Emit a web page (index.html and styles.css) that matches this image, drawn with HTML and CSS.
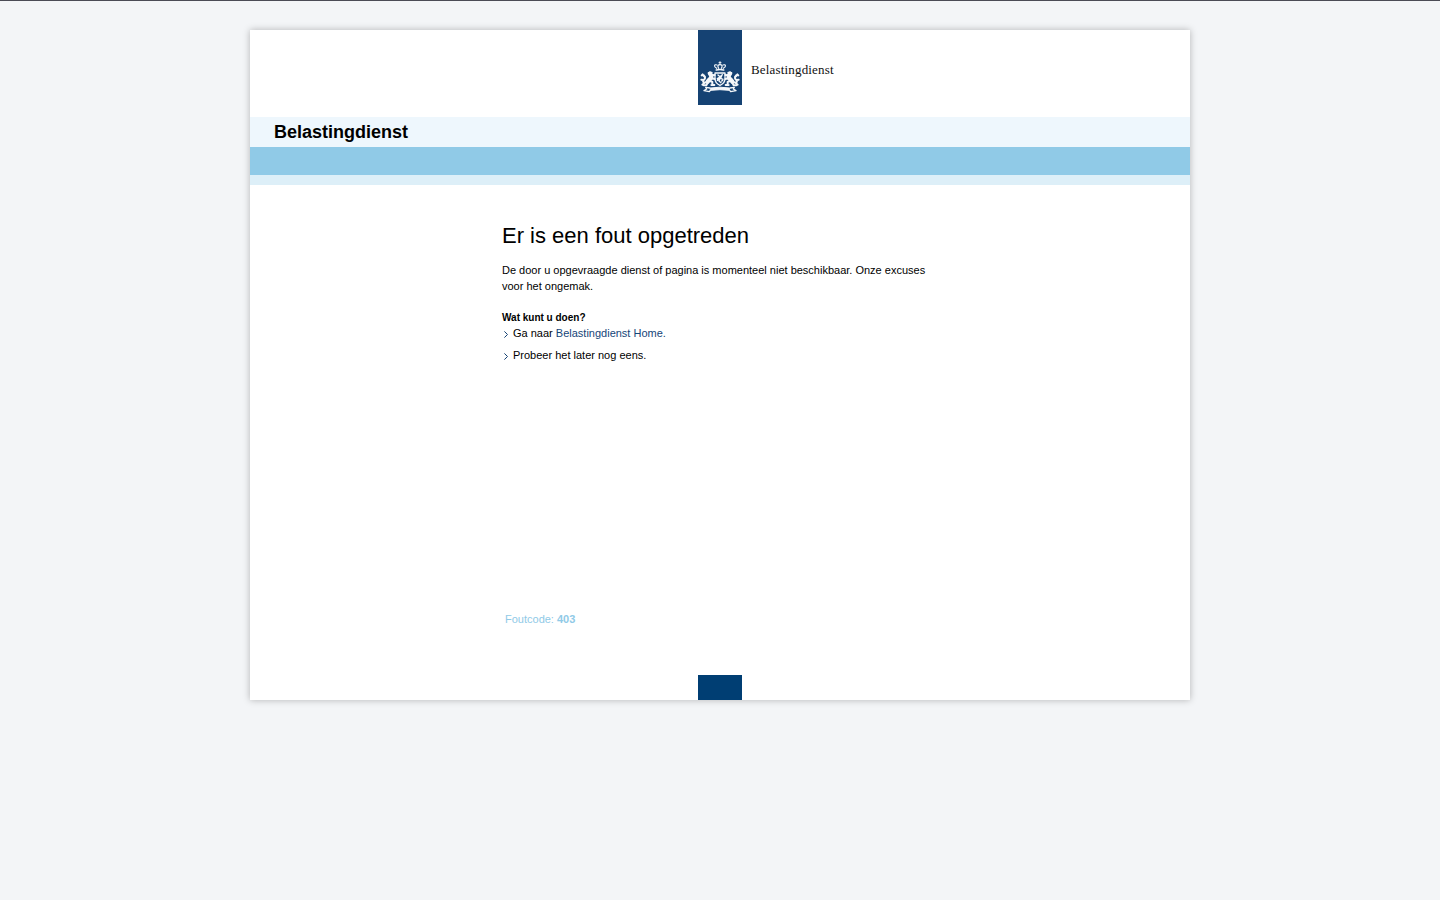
FILE: index.html
```html
<!DOCTYPE html>
<html lang="nl">
<head>
<meta charset="utf-8">
<title>Belastingdienst</title>
<link rel="stylesheet" href="styles.css">
</head>
<body>
<div class="page">
  <header class="logo">
    <svg class="logo-mark" viewBox="24 -60 132 225" aria-hidden="true">
      <rect x="24" y="-60" width="132" height="225" fill="#154273"/>
      <g fill="none" stroke="#f4f7fa" stroke-linecap="round" stroke-linejoin="round">
        <!-- crown -->
        <path d="M90 35v8M87 38h6" stroke-width="3"/>
        <path d="M80 55c-11-7-6-13 1-10 M100 55c11-7 6-13-1-10 M86 55c-5-8-1-11 4-11s9 3 4 11" stroke-width="3.6"/>
        <path d="M79 60q11-3 22 0" stroke-width="5"/>
        <!-- shield -->
        <path d="M75 69h30v17q0 13-15 20q-15-7-15-20z" stroke-width="4"/>
        <path d="M84 75l6 5l7-6M96 75l-4 10l7 3M90 81l-8 5M90 84l-3 9l6 5M82 91l5-4M95 93l3-2" stroke-width="4.2"/>
        <!-- lion supporters -->
        <g id="lion">
          <path d="M60 71c7 7 4 14-2 18l-5 6" stroke-width="13"/>
          <path d="M65 68l-9 1M66 76l8-1M62 84l12 3M57 92l10 4v8M54 96l-5 10h-8M64 105h9" stroke-width="6"/>
          <path d="M49 97c-11 3-12-4-7-8s4-8-2-12M38 73l-3 3M45 81l-5-6M40 90l-6-1M43 99l-6 5" stroke-width="6"/>
        </g>
        <use href="#lion" transform="translate(180 0) scale(-1 1)"/>
        <!-- motto ribbon -->
        <path d="M62 114q28-5 56 0v7q-28-4-56 0z" fill="#f4f7fa" stroke-width="3"/>
        <path d="M60 114l-13-2l3 5l-8 5l16 3l3-4M120 114l13-2l-3 5l8 5l-16 3l-3-4" stroke-width="4"/>
      </g>
    </svg>
    <span class="logo-name">Belastingdienst</span>
  </header>
  <div class="site-title">Belastingdienst</div>
  <div class="bar"></div>
  <div class="bar-light"></div>
  <main class="content">
    <h1>Er is een fout opgetreden</h1>
    <p>De door u opgevraagde dienst of pagina is momenteel niet beschikbaar. Onze excuses voor het ongemak.</p>
    <h2>Wat kunt u doen?</h2>
    <ul class="links">
      <li><svg class="arrow" viewBox="0 0 5 7"><path d="M.4.4L3.5 3.5L.4 6.6"/></svg><span>Ga naar <a href="#">Belastingdienst Home.</a></span></li>
      <li><svg class="arrow" viewBox="0 0 5 7"><path d="M.4.4L3.5 3.5L.4 6.6"/></svg><span>Probeer het later nog eens.</span></li>
    </ul>
    <div class="code">Foutcode: <b>403</b></div>
  </main>
  <div class="foot-block"></div>
</div>
</body>
</html>
```
FILE: styles.css
```css
* { box-sizing: border-box; }
body {
  margin: 0;
  padding-top: 29px;
  min-height: 900px;
  border-top: 1px solid #4b4b55;
  background: #f3f5f7;
  color: #000;
  font: 11px/16px "Liberation Sans", Arial, sans-serif;
}
.page {
  display: flex;
  flex-direction: column;
  width: 940px;
  height: 670px;
  margin: 0 auto;
  background: #fff;
  box-shadow: 0 0 7px rgba(0, 0, 0, .27);
}
.logo {
  display: flex;
  height: 87px;
  padding-left: 448px;
}
.logo-mark { display: block; width: 44px; height: 75px; }
.logo-name {
  margin: 32px 0 0 9px;
  font: 13px/16px "Liberation Serif", serif;
  letter-spacing: .17px;
  color: #111;
}
.site-title {
  height: 30px;
  padding-left: 24px;
  background: #eef7fd;
  font-size: 18px;
  line-height: 30px;
  font-weight: bold;
}
.bar { height: 28px; background: #90cae7; }
.bar-light { height: 10px; background: #ddeff8; }
.content {
  display: flex;
  flex-direction: column;
  height: 490px;
  width: 690px;
  padding: 36px 0 0 252px;
}
h1 { margin: 0; font-size: 22px; line-height: 30px; font-weight: normal; }
p { width: 436px; margin: 11px 0 0; }
h2 { margin: 16px 0 0; font-size: 10px; line-height: 15px; }
.links { margin: 0; padding: 0; list-style: none; }
.links li { display: flex; height: 16px; margin-bottom: 6px; }
.arrow { width: 5px; height: 7px; margin: 6px 4px 0 2px; }
.arrow path { fill: none; stroke: #154273; stroke-width: 1; }
a { color: #154578; text-decoration: none; }
.code { margin: 242px 0 0 3px; color: #90cae7; }
.foot-block {
  width: 44px;
  height: 25px;
  margin-left: 448px;
  background: #003e73;
}
```
